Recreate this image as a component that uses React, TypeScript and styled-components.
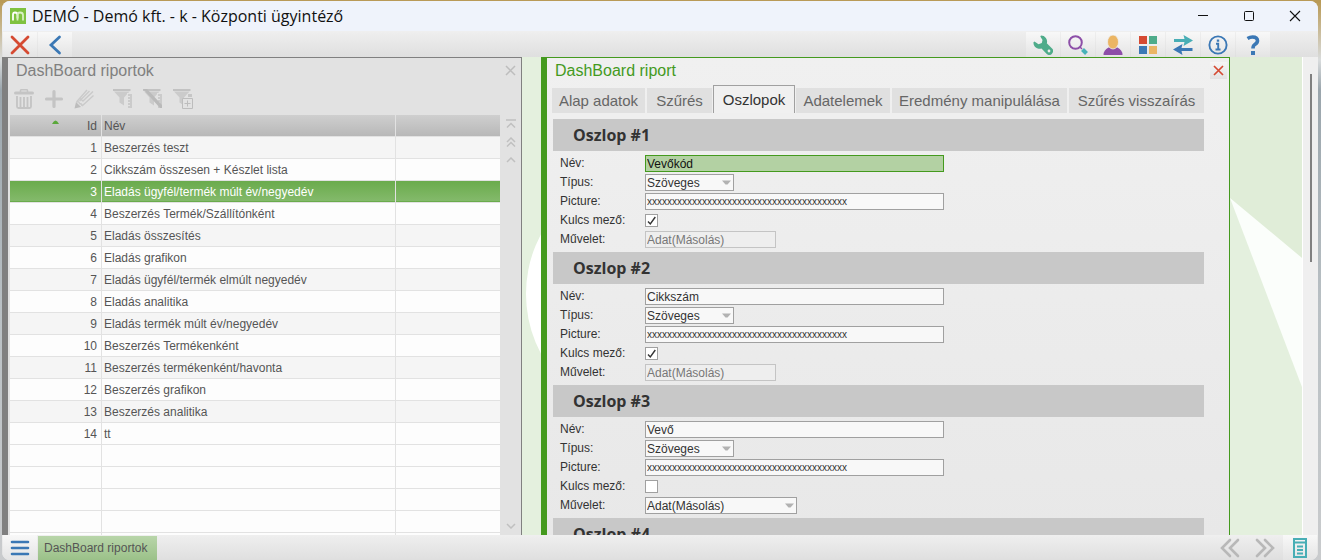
import React from "react";
import styled, { createGlobalStyle, css } from "styled-components";

const GREEN = "#449a1e";

const GlobalStyle = createGlobalStyle`
  *, *::before, *::after { box-sizing: border-box; }
  body {
    margin: 0;
    background: linear-gradient(#b99a56 0 2px, #d9dcdd 60px, #9aa5ac 90px, #b9c0c4 55%, #c9cbcd);
    font-family: "Liberation Sans", Arial, sans-serif;
    font-size: 12px;
    color: #333;
  }
  button, input, select { font: inherit; color: inherit; margin: 0; padding: 0; }
  button { border: 0; background: none; }
  svg { display: block; }
`;

const Desktop = styled.div`
  height: 100vh;
  padding: 1px 3px 0 2px;
`;

const AppWindow = styled.div`
  display: flex;
  flex-direction: column;
  height: 100%;
  overflow: hidden;
  border-radius: 8px;
  background: #efefef;
`;

const TitleBar = styled.header`
  display: flex;
  align-items: center;
  flex: none;
  height: 30px;
  padding-left: 8px;
  background: #eff3fb;
`;

const WindowTitle = styled.h1`
  flex: 1;
  margin: 0 0 0 6px;
  font: 400 16px/24px "Open Sans", "Noto Sans", sans-serif;
  color: #111;
`;

const WindowButton = styled.button`
  display: grid;
  place-items: center;
  width: 46px;
  height: 30px;
`;

const Toolbar = styled.div`
  display: flex;
  align-items: flex-end;
  gap: 1px;
  flex: none;
  height: 26px;
  padding: 0 48px 0 1px;
  background: linear-gradient(#efefef, #dfdfdf);
`;

const ToolButton = styled.button`
  display: grid;
  place-items: center;
  width: 34px;
  height: 25px;
  background: linear-gradient(#f8f8f8, #e4e4e4);
`;

const Spacer = styled.div`
  flex: 1;
`;

const Workspace = styled.div`
  display: flex;
  flex: 1;
  min-height: 0;
`;

const Stage = styled.main`
  position: relative;
  display: flex;
  gap: 19px;
  flex: 1;
  min-width: 0;
  overflow: hidden;
  background: #e4f0de;
`;

const Backdrop = styled.svg`
  position: absolute;
  inset: 0;
  width: 100%;
  height: 100%;
`;

const Panel = styled.section<{ $active?: boolean }>`
  position: relative;
  display: flex;
  flex-direction: column;
  flex: 0 0 ${(p) => (p.$active ? "53%" : "40%")};
  min-width: 0;
  overflow: hidden;
  border: 1px solid ${(p) => (p.$active ? GREEN : "#808080")};
  border-left-width: 6px;
  border-bottom: 0;
  background: ${(p) => (p.$active ? "linear-gradient(#f0f0f0, #e8e8e8)" : "#e2e2e2")};
`;

const PanelHeader = styled.div`
  display: flex;
  align-items: center;
  justify-content: space-between;
  flex: none;
  height: 25px;
  padding: 0 2px 0 8px;
`;

const PanelTitle = styled.h2<{ $active?: boolean }>`
  margin: 0;
  font-size: 16px;
  font-weight: 400;
  line-height: 24px;
  color: ${(p) => (p.$active ? GREEN : "#808080")};
`;

const CloseButton = styled.button<{ $active?: boolean }>`
  display: grid;
  place-items: center;
  width: 17px;
  height: 17px;
  background: ${(p) => (p.$active ? "linear-gradient(#f6f6f6, #e2e2e2)" : "none")};
`;

const ListTools = styled.div`
  display: flex;
  gap: 9px;
  flex: none;
  height: 32px;
  padding-left: 1px;
`;

const ToolGroup = styled.div`
  display: flex;
`;

const FlatButton = styled.button`
  display: grid;
  place-items: center;
  width: 30px;
  height: 32px;
`;

const ListArea = styled.div`
  display: flex;
  flex: 1;
  min-height: 0;
  padding-left: 2px;
`;

const TableFrame = styled.div`
  flex: 1;
  min-width: 0;
  overflow: hidden;
`;

const ReportTable = styled.table`
  width: 100%;
  table-layout: fixed;
  border-collapse: separate;
  border-spacing: 0;
  color: #555;
`;

const HeadCell = styled.th<{ $right?: boolean }>`
  position: relative;
  height: 22px;
  padding: 0 4px 0 2px;
  border-right: 1px solid #e2e2e2;
  border-bottom: 1px solid #e2e2e2;
  background: linear-gradient(#cfcfcf, #b8b8b8);
  font-weight: 400;
  text-align: ${(p) => (p.$right ? "right" : "left")};
  &:last-child { border-right: 0; }
`;

const SortMark = styled.svg`
  position: absolute;
  left: 42px;
  top: 5px;
`;

const Row = styled.tr<{ $selected?: boolean; $shaded?: boolean }>`
  background: ${(p) => (p.$shaded ? "#f5f5f5" : "#fdfdfd")};
  ${(p) =>
    p.$selected &&
    css`
      color: #fff;
      background: linear-gradient(#6aab4c, #86bb6e);
      box-shadow: inset 0 -2px #6aab4c;
    `}
`;

const Cell = styled.td<{ $right?: boolean }>`
  height: 22px;
  padding: 0 4px 0 2px;
  border-right: 1px solid #e2e2e2;
  border-bottom: 1px solid #e2e2e2;
  line-height: 16px;
  white-space: nowrap;
  text-align: ${(p) => (p.$right ? "right" : "left")};
  &:last-child { border-right: 0; }
`;

const ListScroller = styled.div`
  display: flex;
  flex-direction: column;
  align-items: center;
  flex: none;
  width: 21px;
`;

const ScrollButton = styled.button`
  display: grid;
  place-items: center;
  width: 20px;
  height: 18px;
`;

const TabStrip = styled.div`
  display: flex;
  align-items: flex-end;
  gap: 2px;
  flex: none;
  height: 30px;
  padding-left: 5px;
`;

const Tab = styled.button<{ $width: number; $active?: boolean }>`
  width: ${(p) => p.$width}px;
  height: 25px;
  background: #e0e0e0;
  font-size: 15px;
  line-height: 24px;
  color: #666;
  white-space: nowrap;
  ${(p) =>
    p.$active &&
    css`
      height: 28px;
      margin: 0 -1px;
      border: 1px solid #a0a0a0;
      border-bottom: 0;
      background: #f0f0f0;
      color: #333;
    `}
`;

const FormBody = styled.div`
  flex: 1;
  min-height: 0;
  overflow: hidden;
  padding: 6px 25px 0 6px;
`;

const SectionTitle = styled.h3`
  height: 32px;
  margin: 0;
  padding-left: 20px;
  background: #c8c8c8;
  font: 700 16px/32px "Open Sans", "Noto Sans", sans-serif;
`;

const Fields = styled.div`
  padding: 3px 0 3px 7px;
`;

const Field = styled.div`
  display: flex;
  align-items: center;
  height: 19px;
`;

const FieldLabel = styled.label`
  width: 85px;
  line-height: 19px;
`;

const TextBox = styled.input<{ $focus?: boolean; $small?: boolean }>`
  width: 299px;
  height: 17px;
  padding: 0 1px;
  border: 1px solid ${(p) => (p.$focus ? GREEN : "#a0a0a0")};
  border-radius: 0;
  background: ${(p) => (p.$focus ? "#b3d1a3" : "#f8f8f8")};
  color: ${(p) => (p.$focus ? "#111" : "#333")};
  outline: 0;
  ${(p) => p.$small && css`font-size: 10px;`}
`;

const SelectFrame = styled.div<{ $width: number }>`
  display: grid;
  align-items: center;
  width: ${(p) => p.$width}px;
  & > * { grid-area: 1 / 1; }
  & > svg { justify-self: end; margin-right: 3px; pointer-events: none; }
`;

const Select = styled.select`
  appearance: none;
  width: 100%;
  height: 17px;
  padding: 0 1px;
  border: 1px solid #a0a0a0;
  border-radius: 0;
  background: #f8f8f8;
  &:disabled { border-color: #c4c4c4; background: #eee; color: #777; opacity: 1; }
`;

const CheckFrame = styled.div`
  display: grid;
  & > * { grid-area: 1 / 1; }
  & > svg { pointer-events: none; visibility: hidden; }
  & > input:checked + svg { visibility: visible; }
`;

const CheckBox = styled.input`
  appearance: none;
  width: 13px;
  height: 13px;
  border: 1px solid #a0a0a0;
  background: #fff;
`;

const Gutter = styled.div`
  flex: none;
  width: 16px;
  padding: 17px 0 0 7px;
  border-left: 1px solid #fff;
  background: #efefef;
`;

const Thumb = styled.div`
  width: 2px;
  height: 188px;
  background: #808080;
`;

const TaskBar = styled.footer`
  display: flex;
  align-items: flex-end;
  gap: 1px;
  flex: none;
  height: 25px;
  padding: 0 1px;
  background: linear-gradient(#efefef, #dfdfdf);
`;

const TaskButton = styled.button`
  height: 24px;
  padding: 0 10px 0 6px;
  background: linear-gradient(#b8d5a9, #9bc189);
  color: #555;
`;

const PageButton = styled.button`
  display: grid;
  place-items: center;
  width: 34px;
  height: 25px;
`;

const reports = [
  "Beszerzés teszt",
  "Cikkszám összesen + Készlet lista",
  "Eladás ügyfél/termék múlt év/negyedév",
  "Beszerzés Termék/Szállítónként",
  "Eladás összesítés",
  "Eladás grafikon",
  "Eladás ügyfél/termék elmúlt negyedév",
  "Eladás analitika",
  "Eladás termék múlt év/negyedév",
  "Beszerzés Termékenként",
  "Beszerzés termékenként/havonta",
  "Beszerzés grafikon",
  "Beszerzés analitika",
  "tt",
];

const tabs = [
  { name: "Alap adatok", width: 93 },
  { name: "Szűrés", width: 65 },
  { name: "Oszlopok", width: 82 },
  { name: "Adatelemek", width: 94 },
  { name: "Eredmény manipulálása", width: 175 },
  { name: "Szűrés visszaírás", width: 135 },
];

const columns = [
  { name: "Vevőkód", key: true },
  { name: "Cikkszám", key: true },
  { name: "Vevő", key: false },
];

const Cross = ({ size, color, width }: { size: number; color: string; width: number }) => (
  <svg width={size} height={size} viewBox={`0 0 ${size} ${size}`} stroke={color} strokeWidth={width}>
    <path d={`M1 1L${size - 1} ${size - 1}M${size - 1} 1L1 ${size - 1}`} />
  </svg>
);

const Arrow = () => (
  <svg width="9" height="5" viewBox="0 0 9 5"><path d="M0 0.5H9L5.500 4.500H3.500Z" fill="#b2b2b2" /></svg>
);

const Funnel = ({ kind }: { kind: "list" | "off" | "add" }) => (
  <svg width="22" height="22" viewBox="0 0 22 22">
    <path d="M1 1H18.500V3H1Z" fill="#c2c2c2" />
    <path d="M2 3.500H17.500L12 9.500V17.500L7.500 14.500V9.500Z" fill="#cbcbcb" />
    {kind !== "add" && (
      <g>
        <path d="M15 5h6v16h-6z" fill="#e2e2e2" />
        <path d="M16 6h4v14h-4z" fill="#cbcbcb" />
        <path d="M16 8.500h2M16 11.500h2M16 14.500h2M16 17.500h2" stroke="#e2e2e2" />
      </g>
    )}
    {kind === "off" && <path d="M1 1H5L20 17V20H18Z" fill="#bababa" />}
    {kind === "add" && (
      <g>
        <path d="M16 6h4v3h-4z" fill="#c6c6c6" />
        <path d="M10.500 10.500h10v10h-10zM15.500 12.500v6M12.500 15.500h6" fill="#e2e2e2" stroke="#bdbdbd" />
      </g>
    )}
  </svg>
);

function ColumnForm({ index, name, isKey }: { index: number; name: string; isKey: boolean }) {
  const id = (part: string) => `${part}-${index}`;
  return (
    <section>
      <SectionTitle>Oszlop #{index}</SectionTitle>
      <Fields>
        <Field>
          <FieldLabel htmlFor={id("name")}>Név:</FieldLabel>
          <TextBox id={id("name")} defaultValue={name} $focus={index === 1} />
        </Field>
        <Field>
          <FieldLabel htmlFor={id("type")}>Típus:</FieldLabel>
          <SelectFrame $width={89}>
            <Select id={id("type")}><option>Szöveges</option></Select>
            <Arrow />
          </SelectFrame>
        </Field>
        <Field>
          <FieldLabel htmlFor={id("picture")}>Picture:</FieldLabel>
          <TextBox id={id("picture")} defaultValue={"x".repeat(40)} $small />
        </Field>
        <Field>
          <FieldLabel htmlFor={id("key")}>Kulcs mező:</FieldLabel>
          <CheckFrame>
            <CheckBox id={id("key")} type="checkbox" defaultChecked={isKey} />
            <svg width="13" height="13" viewBox="0 0 13 13" fill="none" stroke="#333" strokeWidth="1.400">
              <path d="M3 7.500L5.300 10L10.300 3" />
            </svg>
          </CheckFrame>
        </Field>
        <Field>
          <FieldLabel htmlFor={id("operation")}>Művelet:</FieldLabel>
          <SelectFrame $width={isKey ? 131 : 152}>
            <Select id={id("operation")} disabled={isKey}><option>Adat(Másolás)</option></Select>
            {!isKey && <Arrow />}
          </SelectFrame>
        </Field>
      </Fields>
    </section>
  );
}

export default function App() {
  return (
    <Desktop>
      <GlobalStyle />
      <AppWindow>
        <TitleBar>
          <svg width="16" height="16" viewBox="0 0 16 16" fill="none">
            <path d="M0 0H16V16H0Z" fill="#7fc241" />
            <path d="M3 12.500V6.500Q3 4.500 5 4.500Q7.500 4.500 7.500 7V10.500" stroke="#fff" strokeWidth="1.800" />
            <path d="M7.500 12.500V7Q7.500 4.500 10 4.500Q13 4.500 13 7V12.500" stroke="#d8f0c4" strokeWidth="1.800" />
          </svg>
          <WindowTitle>DEMÓ - Demó kft. - k - Központi ügyintéző</WindowTitle>
          <WindowButton aria-label="Kis méret">
            <svg width="10" height="10"><path d="M0 4.500H10" stroke="#111" /></svg>
          </WindowButton>
          <WindowButton aria-label="Teljes méret">
            <svg width="10" height="10"><rect x="0.500" y="0.500" width="9" height="9" rx="1" fill="none" stroke="#111" /></svg>
          </WindowButton>
          <WindowButton aria-label="Bezárás"><Cross size={12} color="#111" width={1.1} /></WindowButton>
        </TitleBar>

        <Toolbar>
          <ToolButton aria-label="Kilépés">
            <svg width="20" height="20" viewBox="0 0 20 20" stroke="#d54a32" strokeWidth="2.800" strokeLinecap="round"><path d="M2 2L18 18M18 2L2 18" /></svg>
          </ToolButton>
          <ToolButton aria-label="Vissza">
            <svg width="20" height="20" viewBox="0 0 20 20" fill="none" stroke="#3b78b5" strokeWidth="2.800" strokeLinecap="round"><path d="M14.500 2L6 10L14.500 18" /></svg>
          </ToolButton>
          <Spacer />
          <ToolButton aria-label="Beállítások">
            <svg width="20" height="20" viewBox="0 0 20 20">
              <path d="M8 0.500A6 6 0 0 1 13.800 8.300L18.800 13.200A3.600 3.600 0 0 1 13.500 18.800L8.500 13.500A6 6 0 0 1 0.500 7.300L1.500 6.500L5.500 9.200L8.800 8L9.500 5L7.300 1.500Z" fill="#4fac8a" />
              <circle cx="16" cy="16" r="1.400" fill="#eee" />
            </svg>
          </ToolButton>
          <ToolButton aria-label="Keresés">
            <svg width="20" height="20" viewBox="0 0 20 20" fill="none">
              <circle cx="7.500" cy="7.500" r="6.300" stroke="#8d4fa8" strokeWidth="2" />
              <path d="M12 12L14 14" stroke="#8d4fa8" strokeWidth="1.500" />
              <path d="M14.500 14.500L18.500 18.500" stroke="#48b2b8" strokeWidth="4" />
            </svg>
          </ToolButton>
          <ToolButton aria-label="Felhasználó">
            <svg width="20" height="20" viewBox="0 0 20 20">
              <path d="M0.500 20Q0.500 15 5.500 12.500H14.500Q19.500 15 19.500 20Z" fill="#8d4fa8" />
              <ellipse cx="10" cy="7" rx="5.500" ry="7" fill="#ebb563" stroke="#eee" strokeWidth="0.800" />
            </svg>
          </ToolButton>
          <ToolButton aria-label="Modulok">
            <svg width="20" height="20" viewBox="0 0 20 20">
              <path d="M1 1h8v8H1z" fill="#d54a32" /><path d="M11 1h8v8h-8z" fill="#4fac8a" />
              <path d="M1 11h8v8H1z" fill="#3b78b5" /><path d="M11 11h8v8h-8z" fill="#ebb563" />
            </svg>
          </ToolButton>
          <ToolButton aria-label="Váltás">
            <svg width="20" height="20" viewBox="0 0 20 20">
              <path d="M1 4H11.500L10.500 0L20 5.500L10.500 11L11.500 7H1Z" fill="#48aeb5" />
              <path d="M19.500 13H8.500L9.500 9L0 14.500L9.500 20L8.500 16H19.500Z" fill="#3b78b5" />
            </svg>
          </ToolButton>
          <ToolButton aria-label="Információ">
            <svg width="20" height="20" viewBox="0 0 20 20" fill="none" stroke="#3b78b5">
              <circle cx="10" cy="10" r="8.600" strokeWidth="1.900" />
              <path d="M10 4.500V6.800" strokeWidth="2.400" /><path d="M8 8.700H10.200V14.500M7.500 14.500H12.500" strokeWidth="1.900" />
            </svg>
          </ToolButton>
          <ToolButton aria-label="Súgó">
            <svg width="20" height="20" viewBox="0 0 20 20">
              <path d="M4.500 3.500Q7 2 9.500 2Q14.500 2 14.500 5.800Q14.500 8 11.800 9.500Q10 10.500 10 13.500" fill="none" stroke="#3b78b5" strokeWidth="3.600" />
              <path d="M8 16h4v4H8z" fill="#3b78b5" />
            </svg>
          </ToolButton>
        </Toolbar>

        <Workspace>
          <Stage>
            <Backdrop viewBox="0 0 1300 478" preserveAspectRatio="none" aria-hidden="true">
              <path d="M1228 0H1300V201L1228 141Z" fill="#e0edd8" />
              <path d="M1228 141L1300 201V330Z" fill="#fbfefb" />
              <circle cx="651" cy="237" r="127" fill="#fff" />
            </Backdrop>

            <Panel>
              <PanelHeader>
                <PanelTitle>DashBoard riportok</PanelTitle>
                <CloseButton aria-label="Lista bezárása"><Cross size={11} color="#bdbdbd" width={1.5} /></CloseButton>
              </PanelHeader>
              <ListTools>
                <ToolGroup>
                  <FlatButton aria-label="Törlés">
                    <svg width="20" height="20" viewBox="0 0 20 20" fill="none" stroke="#c4c4c4">
                      <path d="M6.500 3V1.500Q6.500 0.800 7.500 0.800H12.500Q13.500 0.800 13.500 1.500V3" strokeWidth="1.500" />
                      <path d="M1.500 4H18.500" strokeWidth="3" strokeLinecap="round" />
                      <path d="M3 7V17.500Q3 19 4.500 19H15.500Q17 19 17 17.500V7M6.500 8V18M10 8V18M13.500 8V18" strokeWidth="1.800" />
                    </svg>
                  </FlatButton>
                  <FlatButton aria-label="Új">
                    <svg width="20" height="20" viewBox="0 0 20 20" stroke="#c4c4c4" strokeWidth="3.200" strokeLinecap="round"><path d="M10 2.500V17.500M2.500 10H17.500" /></svg>
                  </FlatButton>
                  <FlatButton aria-label="Módosítás">
                    <svg width="20" height="20" viewBox="0 0 20 20" fill="none" stroke="#cacaca" strokeWidth="1.400">
                      <path d="M2.500 13L13 1M9 12L19 2.500M8 17L19.500 6.500M2.500 13Q5 12 5.500 14.500Q8 14.500 8 17M6 9.500L9.500 12.500" />
                      <path d="M5.500 12L15.500 2" />
                      <path d="M2 13L0.500 19.500L7 18Z" fill="#bcbcbc" stroke="none" />
                    </svg>
                  </FlatButton>
                </ToolGroup>
                <ToolGroup>
                  <FlatButton aria-label="Szűrő"><Funnel kind="list" /></FlatButton>
                  <FlatButton aria-label="Szűrő törlése"><Funnel kind="off" /></FlatButton>
                  <FlatButton aria-label="Szűrő hozzáadása"><Funnel kind="add" /></FlatButton>
                </ToolGroup>
              </ListTools>
              <ListArea>
                <TableFrame>
                  <ReportTable>
                    <colgroup>
                      <col width="92" />
                      <col width="294" />
                      <col />
                    </colgroup>
                    <thead>
                      <tr>
                        <HeadCell $right>
                          <SortMark width="7" height="4" viewBox="0 0 7 4"><path d="M0 4Q3.500 -3 7 4Z" fill="#5aa83a" /></SortMark>
                          Id
                        </HeadCell>
                        <HeadCell>Név</HeadCell>
                        <HeadCell />
                      </tr>
                    </thead>
                    <tbody>
                      {reports.map((name, i) => (
                        <Row key={name} $selected={i === 2} $shaded={i % 2 === 0}>
                          <Cell $right>{i + 1}</Cell>
                          <Cell>{name}</Cell>
                          <Cell />
                        </Row>
                      ))}
                      {[0, 1, 2, 3, 4].map((i) => (
                        <Row key={i}><Cell /><Cell /><Cell /></Row>
                      ))}
                    </tbody>
                  </ReportTable>
                </TableFrame>
                <ListScroller>
                  <ScrollButton aria-label="Első sor">
                    <svg width="10" height="10" viewBox="0 0 10 10" fill="none" stroke="#c0c0c0" strokeWidth="1.500"><path d="M0 1H10M1 8.500L5 4.500L9 8.500" /></svg>
                  </ScrollButton>
                  <ScrollButton aria-label="Előző oldal">
                    <svg width="10" height="10" viewBox="0 0 10 10" fill="none" stroke="#c0c0c0" strokeWidth="1.500"><path d="M1 5L5 1L9 5M1 9.500L5 5.500L9 9.500" /></svg>
                  </ScrollButton>
                  <ScrollButton aria-label="Előző sor">
                    <svg width="10" height="6" viewBox="0 0 10 6" fill="none" stroke="#c0c0c0" strokeWidth="1.500"><path d="M1 5L5 1L9 5" /></svg>
                  </ScrollButton>
                  <Spacer />
                  <ScrollButton aria-label="Következő sor">
                    <svg width="10" height="6" viewBox="0 0 10 6" fill="none" stroke="#c0c0c0" strokeWidth="1.500"><path d="M1 1L5 5L9 1" /></svg>
                  </ScrollButton>
                </ListScroller>
              </ListArea>
            </Panel>

            <Panel $active>
              <PanelHeader>
                <PanelTitle $active>DashBoard riport</PanelTitle>
                <CloseButton $active aria-label="Riport bezárása"><Cross size={11} color="#d54a32" width={1.7} /></CloseButton>
              </PanelHeader>
              <TabStrip role="tablist">
                {tabs.map((tab, i) => (
                  <Tab key={tab.name} role="tab" aria-selected={i === 2} $active={i === 2} $width={tab.width}>
                    {tab.name}
                  </Tab>
                ))}
              </TabStrip>
              <FormBody>
                {columns.map((column, i) => (
                  <ColumnForm key={column.name} index={i + 1} name={column.name} isKey={column.key} />
                ))}
                <SectionTitle>Oszlop #{columns.length + 1}</SectionTitle>
              </FormBody>
            </Panel>
          </Stage>
          <Gutter><Thumb /></Gutter>
        </Workspace>

        <TaskBar>
          <ToolButton aria-label="Menü">
            <svg width="20" height="18" viewBox="0 0 20 18" stroke="#3b78b5" strokeWidth="2.600" strokeLinecap="round"><path d="M2 3H18M2 9H18M2 15H18" /></svg>
          </ToolButton>
          <TaskButton>DashBoard riportok</TaskButton>
          <Spacer />
          <PageButton aria-label="Előző ablak">
            <svg width="20" height="20" viewBox="0 0 20 20" fill="none" stroke="#b8b8b8" strokeWidth="2.600" strokeLinecap="round"><path d="M10 2L2 10L10 18M18 2L10 10L18 18" /></svg>
          </PageButton>
          <PageButton aria-label="Következő ablak">
            <svg width="20" height="20" viewBox="0 0 20 20" fill="none" stroke="#b8b8b8" strokeWidth="2.600" strokeLinecap="round"><path d="M2 2L10 10L2 18M10 2L18 10L10 18" /></svg>
          </PageButton>
          <ToolButton aria-label="Napló">
            <svg width="14" height="20" viewBox="0 0 14 20" fill="none" stroke="#48aeb5" strokeWidth="2">
              <path d="M1 1H13V19H1ZM1 4.500H13M4 8.500H10M4 12H10M4 15.500H10" />
            </svg>
          </ToolButton>
        </TaskBar>
      </AppWindow>
    </Desktop>
  );
}
